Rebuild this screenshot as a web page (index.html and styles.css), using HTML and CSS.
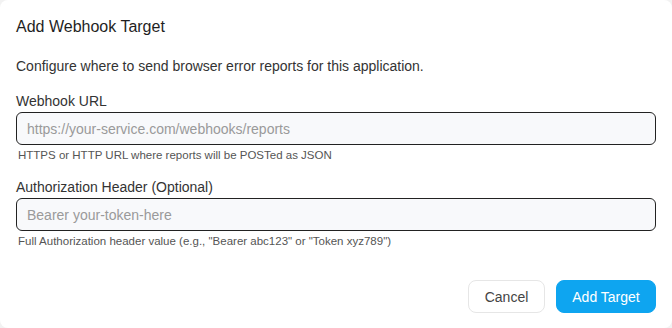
FILE: index.html
```html
<!DOCTYPE html>
<html lang="en">
<head>
    <meta charset="UTF-8">
    <meta name="viewport" content="width=device-width, initial-scale=1.0">
    <title>Add Webhook Target</title>
    <link rel="stylesheet" href="styles.css">
</head>
<body>
    <div class="dialog">
        <h2 class="dialog__title">Add Webhook Target</h2>
        <p class="dialog__desc">Configure where to send browser error reports for this application.</p>
        <div class="field">
            <label class="field__label" for="url">Webhook URL</label>
            <input class="field__input" id="url" type="text" placeholder="https://your-service.com/webhooks/reports">
            <div class="field__hint">HTTPS or HTTP URL where reports will be POSTed as JSON</div>
        </div>
        <div class="field">
            <label class="field__label" for="auth">Authorization Header (Optional)</label>
            <input class="field__input" id="auth" type="text" placeholder="Bearer your-token-here">
            <div class="field__hint">Full Authorization header value (e.g., "Bearer abc123" or "Token xyz789")</div>
        </div>
        <div class="actions">
            <button class="btn btn--ghost">Cancel</button>
            <button class="btn btn--primary">Add Target</button>
        </div>
    </div>
</body>
</html>
```

FILE: styles.css
```css
* {
    box-sizing: border-box;
}
body {
    margin: 0;
    background: #f2f2f2;
    font-family: 'Liberation Sans', Arial, sans-serif;
    color: #222;
}
.dialog {
    width: 672px;
    height: 328px;
    background: #fff;
    border-radius: 8px;
    padding: 16px 16px 0 16px;
    display: flex;
    flex-direction: column;
}
.dialog__title {
    margin: 0;
    font-size: 16px;
    font-weight: 400;
    line-height: 22px;
    color: #1f1f1f;
}
.dialog__desc {
    margin: 18px 0 0 0;
    font-size: 14px;
    line-height: 20px;
    color: #333;
}
.field {
    display: flex;
    flex-direction: column;
    margin-top: 17px;
}
.field__label {
    font-size: 14px;
    line-height: 16px;
    color: #333;
    margin-bottom: 3px;
}
.field__input {
    width: 100%;
    height: 33px;
    border: 1px solid #222;
    border-radius: 6px;
    background: #f8f9fb;
    padding: 0 10px;
    font-family: inherit;
    font-size: 14px;
    color: #222;
    outline: none;
}
.field__input::placeholder {
    color: #9a9a9a;
}
.field__hint {
    margin-top: 3px;
    padding-left: 2px;
    font-size: 11.5px;
    line-height: 14px;
    color: #555;
}
.actions {
    display: flex;
    justify-content: flex-end;
    gap: 11px;
    margin-top: 32px;
}
.btn {
    height: 33px;
    border-radius: 8px;
    font-family: inherit;
    font-size: 14px;
    white-space: nowrap;
    cursor: pointer;
}
.btn--ghost {
    background: #fff;
    border: 1px solid #e6e6e6;
    color: #444;
    width: 77px;
}
.btn--primary {
    background: #0ea5f0;
    border: 1px solid #0ea5f0;
    color: #fff;
    width: 100px;
}
```
